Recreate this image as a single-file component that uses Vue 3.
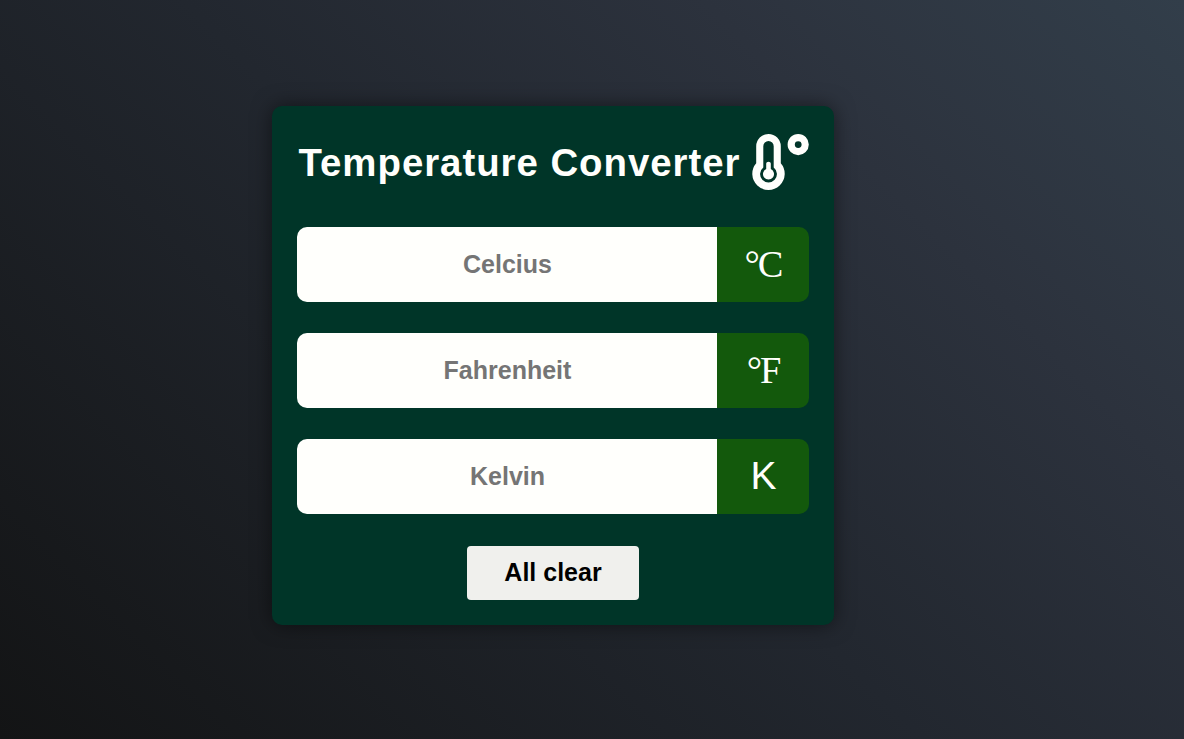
<script setup>
import { reactive } from 'vue'

const fields = reactive([
  { id: 'celsius', label: 'Celcius', unit: '°C', value: '' },
  { id: 'fahrenheit', label: 'Fahrenheit', unit: '°F', value: '' },
  { id: 'kelvin', label: 'Kelvin', unit: 'K', value: '' },
])

const round = (n) => String(Math.round(n * 100) / 100)

function convert(id, value) {
  if (value === '' || Number.isNaN(Number(value))) return
  const n = Number(value)
  const c = id === 'celsius' ? n : id === 'fahrenheit' ? ((n - 32) * 5) / 9 : n - 273.15
  const results = { celsius: c, fahrenheit: (c * 9) / 5 + 32, kelvin: c + 273.15 }
  for (const f of fields) f.value = f.id === id ? value : round(results[f.id])
}

function clearAll() {
  for (const f of fields) f.value = ''
}
</script>

<template>
  <main class="page">
    <section class="card">
      <header class="header">
        <h1 class="title">Temperature Converter</h1>
        <svg class="thermo" viewBox="0 0 57 56" aria-hidden="true">
          <path
            fill-rule="evenodd"
            d="M16.5 0A12.3 12.3 0 0 0 4.2 12.3V29.2A16.2 16.2 0 1 0 28.8 29.2V12.3A12.3 12.3 0 0 0 16.5 0ZM16.5 7A5.2 5.2 0 0 0 11.3 12.2V33.5A8.4 8.4 0 1 0 21.7 33.5V12.2A5.2 5.2 0 0 0 16.5 7Z"
          />
          <path d="M14.2 29.5A2.3 1.8 0 0 1 18.8 29.5V35.1A5.5 5.5 0 1 1 14.2 35.1Z" />
          <path
            fill-rule="evenodd"
            d="M46.2 0A10.6 10.6 0 1 0 46.2 21.2A10.6 10.6 0 1 0 46.2 0ZM46.2 7.2A3.4 3.4 0 1 1 46.2 14A3.4 3.4 0 1 1 46.2 7.2Z"
          />
        </svg>
      </header>
      <div v-for="f in fields" :key="f.id" class="row">
        <input
          class="field"
          :placeholder="f.label"
          :aria-label="f.label"
          :value="f.value"
          @input="convert(f.id, $event.target.value)"
        />
        <span class="unit" :class="f.id">{{ f.unit }}</span>
      </div>
      <button class="clear" type="button" @click="clearAll">All clear</button>
    </section>
  </main>
</template>

<style>
body {
  margin: 0;
}
</style>

<style scoped>
.page {
  box-sizing: border-box;
  height: 739px;
  padding: 106px 0 0 272px;
  overflow: hidden;
  background: linear-gradient(45deg, #131415 0%, #22272f 48%, #2c323d 75%, #323e4a 100%);
  font-family: "Liberation Sans", Arial, sans-serif;
}
.card {
  box-sizing: border-box;
  width: 562px;
  height: 519px;
  padding: 28px 25px 25px;
  display: flex;
  flex-direction: column;
  align-items: center;
  background: #003528;
  border-radius: 10px;
  box-shadow: 0 0 20px rgba(0, 0, 0, 0.5);
}
.header {
  width: 512px;
  height: 56px;
  margin-bottom: 37px;
  padding-left: 1.5px;
  box-sizing: border-box;
  display: flex;
  justify-content: space-between;
  align-items: center;
}
.title {
  margin: 2px 0 0;
  color: #fffffc;
  font-size: 38.4px;
  line-height: 44px;
  letter-spacing: 0.96px;
  white-space: nowrap;
}
.thermo {
  width: 57px;
  height: 56px;
  flex: none;
  fill: #fffffc;
}
.row {
  width: 512px;
  height: 75px;
  margin-bottom: 31px;
  flex: none;
  display: flex;
  border-radius: 10px;
  overflow: hidden;
}
.field {
  box-sizing: border-box;
  width: 420px;
  height: 75px;
  padding: 0 0 0 1px;
  border: 0;
  outline: 0;
  background: #fffffc;
  color: #111;
  font: bold 25px "Liberation Sans", Arial, sans-serif;
  text-align: center;
}
.field::placeholder {
  color: #757575;
}
.unit {
  box-sizing: border-box;
  width: 92px;
  padding-bottom: 2px;
  display: flex;
  align-items: center;
  justify-content: center;
  background: #13590c;
  color: #fffffc;
  font-family: "Liberation Serif", "Times New Roman", serif;
  font-size: 38.4px;
  letter-spacing: -2px;
}
.kelvin {
  padding: 0 0 2px 1px;
  font-family: "Liberation Sans", Arial, sans-serif;
  font-size: 39px;
  letter-spacing: 0;
}
.clear {
  width: 172px;
  height: 54px;
  margin-top: 1px;
  padding: 0 0 2px;
  flex: none;
  border: 0;
  border-radius: 4px;
  background: #f0f0ed;
  color: #000;
  font: bold 25px "Liberation Sans", Arial, sans-serif;
}
</style>
